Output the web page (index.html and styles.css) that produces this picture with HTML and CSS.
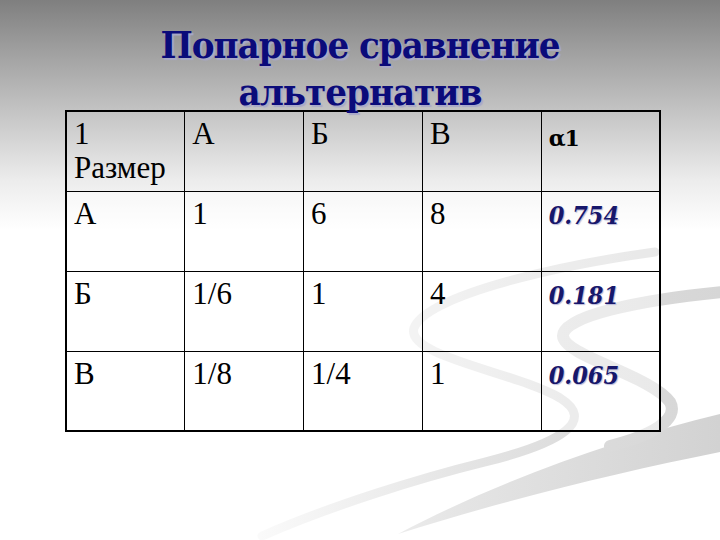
FILE: index.html
```html
<!DOCTYPE html>
<html lang="ru">
<head>
<meta charset="utf-8">
<title>Попарное сравнение альтернатив</title>
<link rel="stylesheet" href="styles.css">
</head>
<body>
<div class="slide">
  <svg class="swoosh" width="720" height="540" viewBox="0 0 720 540" aria-hidden="true">
    <defs>
      <linearGradient id="gl" gradientUnits="userSpaceOnUse" x1="260" y1="0" x2="720" y2="0">
        <stop offset="0" stop-color="#fafafa"/>
        <stop offset="0.45" stop-color="#e4e4e4"/>
        <stop offset="1" stop-color="#d2d2d2"/>
      </linearGradient>
      <linearGradient id="gs" gradientUnits="userSpaceOnUse" x1="400" y1="0" x2="720" y2="0">
        <stop offset="0" stop-color="#e2e2e2"/>
        <stop offset="1" stop-color="#d6d6d6"/>
      </linearGradient>
    </defs>
    <path d="M720 414 C620 438 500 480 398 534 C505 500 620 472 720 452 Z" fill="url(#gl)"/>
    <path d="M655 252 C540 268 425 298 414 328 C405 356 515 372 560 398 C595 420 565 442 485 462 C420 478 330 506 262 536" fill="none" stroke="url(#gl)" stroke-width="9" stroke-linecap="round"/>
    <path d="M722 292 C640 300 562 316 563 336 C564 356 650 375 670 402 C680 420 650 436 610 446" fill="none" stroke="url(#gs)" stroke-width="12" stroke-linecap="round"/>
  </svg>
  <h1 class="title">Попарное сравнение<br>альтернатив</h1>
  <table class="grid">
    <tr class="head">
      <td>1<br>Размер</td>
      <td>А</td>
      <td>Б</td>
      <td>В</td>
      <td><span class="alpha">α1</span></td>
    </tr>
    <tr>
      <td>А</td><td>1</td><td>6</td><td>8</td><td><span class="val">0.754</span></td>
    </tr>
    <tr>
      <td>Б</td><td>1/6</td><td>1</td><td>4</td><td><span class="val">0.181</span></td>
    </tr>
    <tr>
      <td>В</td><td>1/8</td><td>1/4</td><td>1</td><td><span class="val">0.065</span></td>
    </tr>
  </table>
</div>
</body>
</html>
```
FILE: styles.css
```css
html, body {
  margin: 0;
  padding: 0;
}
body {
  width: 720px;
  height: 540px;
  overflow: hidden;
  background: linear-gradient(to bottom, #7f7f7f 0px, #a2a2a2 55px, #c6c6c6 115px, #ececec 180px, #ffffff 230px);
}
.slide {
  position: relative;
  width: 720px;
  height: 540px;
  padding-top: 21px;
  box-sizing: border-box;
}
.swoosh {
  position: absolute;
  left: 0;
  top: 0;
  z-index: 0;
}
.title {
  position: relative;
  z-index: 2;
  margin: 0 0 -5px 0;
  height: 94px;
  text-align: center;
  font-family: "DejaVu Serif Condensed", "DejaVu Serif", serif;
  font-weight: bold;
  font-size: 38px;
  line-height: 47px;
  letter-spacing: -1px;
  color: #0b0b7a;
  text-shadow: 2px 2px 1px #a9a9c8;
}
.grid {
  position: relative;
  z-index: 1;
  margin-left: 65px;
  width: 596px;
  border-collapse: collapse;
  table-layout: fixed;
  border: 2px solid #000;
  font-family: "Liberation Serif", "Times New Roman", serif;
  font-size: 31px;
  line-height: 34px;
  color: #000;
}
.grid td {
  border: 1px solid #000;
  height: 80px;
  box-sizing: border-box;
  vertical-align: top;
  padding: 5px 6px 0 7px;
}
.grid tr + tr td {
  background: rgba(255, 255, 255, 0.45);
}
.alpha {
  display: inline-block;
  margin-top: 4px;
  font-family: "DejaVu Serif", serif;
  font-weight: bold;
  font-size: 22px;
  letter-spacing: -1px;
}
.val {
  font-family: "DejaVu Serif Condensed", "DejaVu Serif", serif;
  font-weight: bold;
  font-style: italic;
  font-size: 25px;
  color: #17176b;
  text-shadow: 1px 1px 1px #b8b8d8;
}
```
